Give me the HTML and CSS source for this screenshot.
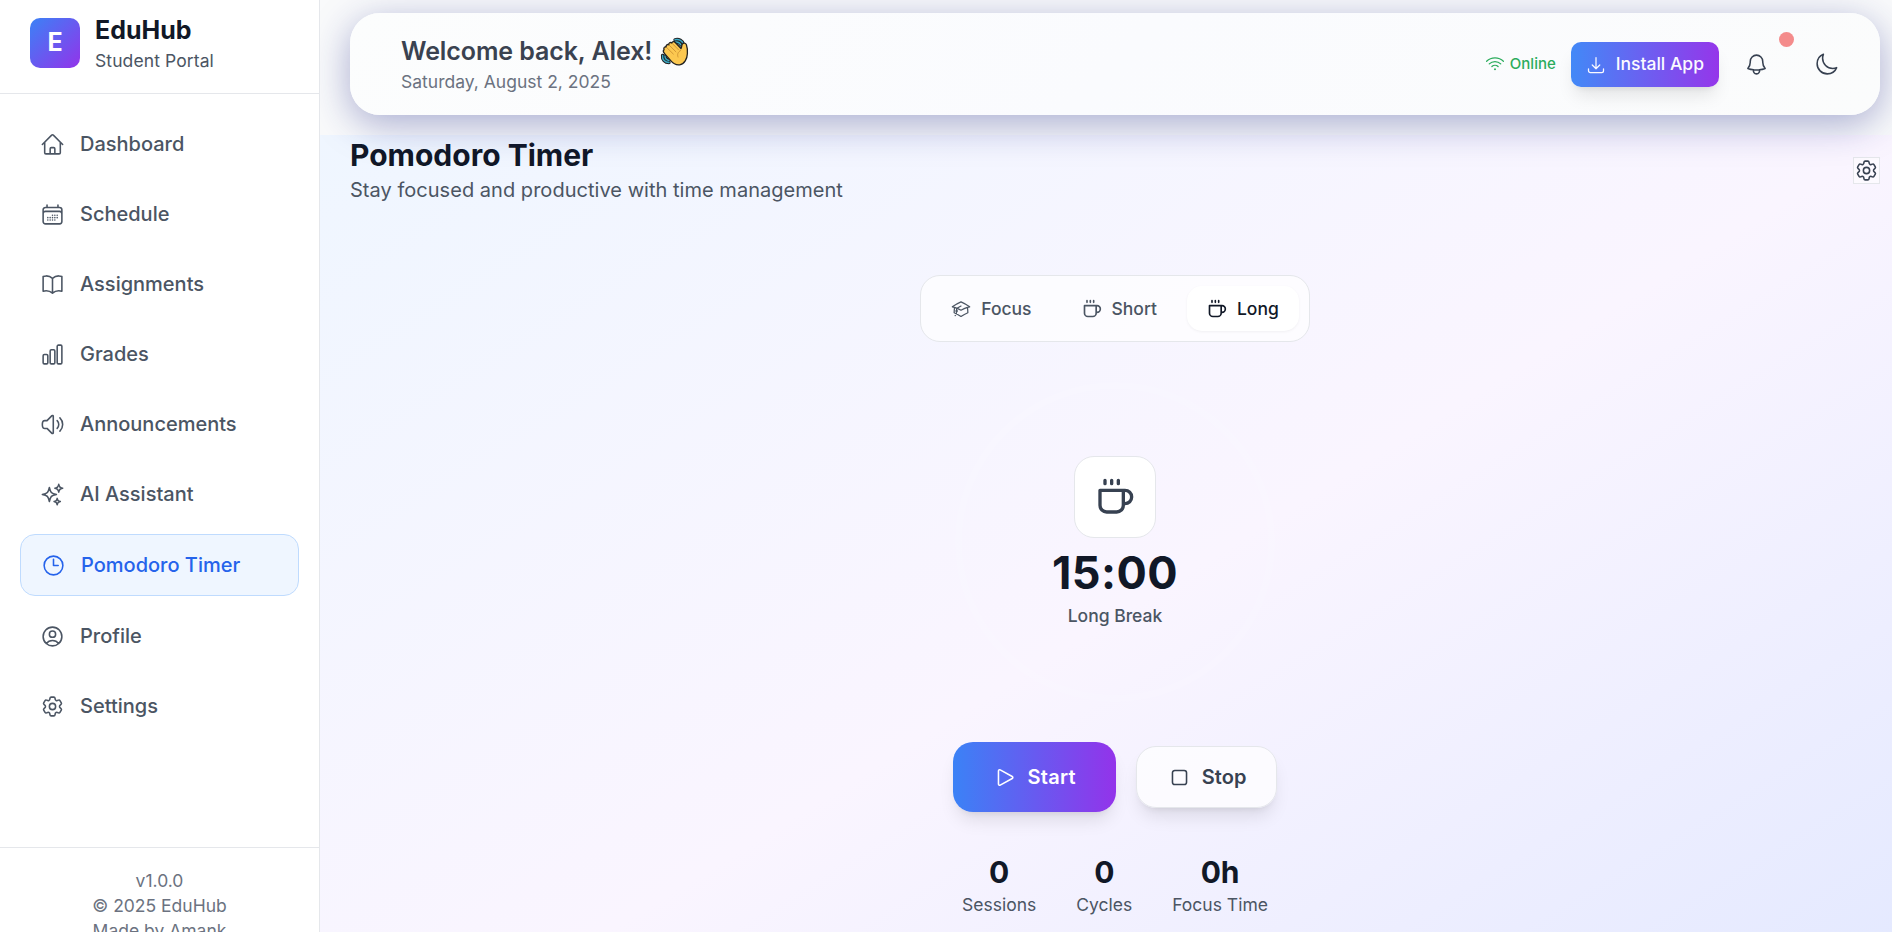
FILE: index.html
```html
<!DOCTYPE html>
<html lang="en">
<head>
<meta charset="utf-8">
<title>EduHub - Pomodoro Timer</title>
<link rel="stylesheet" href="styles.css">
</head>
<body>
<div class="app">
  <aside class="sidebar">
    <div class="brand">
      <div class="logo">E</div>
      <div>
        <div class="brand-name">EduHub</div>
        <div class="brand-sub">Student Portal</div>
      </div>
    </div>
    <nav class="nav">
      <a class="nav-item"><svg class="icon" viewBox="0 0 24 24"><path d="m2.25 12 8.954-8.955c.44-.439 1.152-.439 1.591 0L21.75 12M4.5 9.75v10.125c0 .621.504 1.125 1.125 1.125H9.75v-4.875c0-.621.504-1.125 1.125-1.125h2.25c.621 0 1.125.504 1.125 1.125V21h4.125c.621 0 1.125-.504 1.125-1.125V9.75M8.25 21h8.25"/></svg>Dashboard</a>
      <a class="nav-item"><svg class="icon" viewBox="0 0 24 24"><path d="M6.75 3v2.25M17.25 3v2.25M3 18.75V7.5a2.25 2.25 0 0 1 2.25-2.25h13.5A2.25 2.25 0 0 1 21 7.5v11.25m-18 0A2.25 2.25 0 0 0 5.25 21h13.5A2.25 2.25 0 0 0 21 18.75m-18 0v-7.5A2.25 2.25 0 0 1 5.25 9h13.5A2.25 2.25 0 0 1 21 11.25v7.5m-9-6h.008v.008H12v-.008ZM12 15h.008v.008H12V15Zm0 2.25h.008v.008H12v-.008ZM9.75 15h.008v.008H9.75V15Zm0 2.25h.008v.008H9.75v-.008ZM7.5 15h.008v.008H7.5V15Zm0 2.25h.008v.008H7.5v-.008Zm6.75-4.5h.008v.008h-.008v-.008Zm0 2.25h.008v.008h-.008V15Zm0 2.25h.008v.008h-.008v-.008Zm2.25-4.5h.008v.008H16.5v-.008Zm0 2.25h.008v.008H16.5V15Z"/></svg>Schedule</a>
      <a class="nav-item"><svg class="icon" viewBox="0 0 24 24"><path d="M12 6.042A8.967 8.967 0 0 0 6 3.75c-1.052 0-2.062.18-3 .512v14.25A8.987 8.987 0 0 1 6 18c2.305 0 4.408.867 6 2.292m0-14.25a8.966 8.966 0 0 1 6-2.292c1.052 0 2.062.18 3 .512v14.25A8.987 8.987 0 0 0 18 18a8.967 8.967 0 0 0-6 2.292m0-14.25v14.25"/></svg>Assignments</a>
      <a class="nav-item"><svg class="icon" viewBox="0 0 24 24"><path d="M3 13.125C3 12.504 3.504 12 4.125 12h2.25c.621 0 1.125.504 1.125 1.125v6.75C7.5 20.496 6.996 21 6.375 21h-2.25A1.125 1.125 0 0 1 3 19.875v-6.75ZM9.75 8.625c0-.621.504-1.125 1.125-1.125h2.25c.621 0 1.125.504 1.125 1.125v11.25c0 .621-.504 1.125-1.125 1.125h-2.25a1.125 1.125 0 0 1-1.125-1.125V8.625ZM16.5 4.125c0-.621.504-1.125 1.125-1.125h2.25C20.496 3 21 3.504 21 4.125v15.75c0 .621-.504 1.125-1.125 1.125h-2.25a1.125 1.125 0 0 1-1.125-1.125V4.125Z"/></svg>Grades</a>
      <a class="nav-item"><svg class="icon" viewBox="0 0 24 24"><path d="M19.114 5.636a9 9 0 0 1 0 12.728M16.463 8.288a5.25 5.25 0 0 1 0 7.424M6.75 8.25l4.72-4.72a.75.75 0 0 1 1.28.53v15.88a.75.75 0 0 1-1.28.53l-4.72-4.72H4.51c-.88 0-1.704-.507-1.938-1.354A9.009 9.009 0 0 1 2.25 12c0-.83.112-1.633.322-2.396C2.806 8.756 3.63 8.25 4.51 8.25H6.75Z"/></svg>Announcements</a>
      <a class="nav-item"><svg class="icon" viewBox="0 0 24 24"><path d="M9.813 15.904 9 18.75l-.813-2.846a4.5 4.5 0 0 0-3.09-3.09L2.25 12l2.846-.813a4.5 4.5 0 0 0 3.09-3.09L9 5.25l.813 2.846a4.5 4.5 0 0 0 3.09 3.09L15.75 12l-2.846.813a4.5 4.5 0 0 0-3.09 3.09ZM18.259 8.715 18 9.75l-.259-1.035a3.375 3.375 0 0 0-2.455-2.456L14.25 6l1.036-.259a3.375 3.375 0 0 0 2.455-2.456L18 2.25l.259 1.035a3.375 3.375 0 0 0 2.456 2.456L21.75 6l-1.035.259a3.375 3.375 0 0 0-2.456 2.456ZM16.894 20.567 16.5 21.75l-.394-1.183a2.25 2.25 0 0 0-1.423-1.423L13.5 18.75l1.183-.394a2.25 2.25 0 0 0 1.423-1.423l.394-1.183.394 1.183a2.25 2.25 0 0 0 1.423 1.423l1.183.394-1.183.394a2.25 2.25 0 0 0-1.423 1.423Z"/></svg>AI Assistant</a>
      <a class="nav-item active"><svg class="icon" viewBox="0 0 24 24"><path d="M12 6v6h4.5m4.5 0a9 9 0 1 1-18 0 9 9 0 0 1 18 0Z"/></svg>Pomodoro Timer</a>
      <a class="nav-item"><svg class="icon" viewBox="0 0 24 24"><path d="M17.982 18.725A7.488 7.488 0 0 0 12 15.75a7.488 7.488 0 0 0-5.982 2.975m11.963 0a9 9 0 1 0-11.963 0m11.963 0A8.966 8.966 0 0 1 12 21a8.966 8.966 0 0 1-5.982-2.275M15 9.75a3 3 0 1 1-6 0 3 3 0 0 1 6 0Z"/></svg>Profile</a>
      <a class="nav-item"><svg class="icon" viewBox="0 0 24 24"><path id="cog" d="M9.594 3.94c.09-.542.56-.94 1.11-.94h2.593c.55 0 1.02.398 1.11.94l.213 1.281c.063.374.313.686.645.87.074.04.147.083.22.127.325.196.72.257 1.075.124l1.217-.456a1.125 1.125 0 0 1 1.37.49l1.296 2.247a1.125 1.125 0 0 1-.26 1.431l-1.003.827c-.293.241-.438.613-.43.992a7.723 7.723 0 0 1 0 .255c-.008.378.137.75.43.991l1.004.827c.424.35.534.955.26 1.43l-1.298 2.247a1.125 1.125 0 0 1-1.369.491l-1.217-.456c-.355-.133-.75-.072-1.076.124a6.47 6.47 0 0 1-.22.128c-.331.183-.581.495-.644.869l-.213 1.281c-.09.543-.56.94-1.11.94h-2.594c-.55 0-1.019-.398-1.11-.94l-.213-1.281c-.062-.374-.312-.686-.644-.87a6.52 6.52 0 0 1-.22-.127c-.325-.196-.72-.257-1.076-.124l-1.217.456a1.125 1.125 0 0 1-1.369-.49l-1.297-2.247a1.125 1.125 0 0 1 .26-1.431l1.004-.827c.292-.24.437-.613.43-.991a6.932 6.932 0 0 1 0-.255c.007-.38-.138-.751-.43-.992l-1.004-.827a1.125 1.125 0 0 1-.26-1.43l1.297-2.247a1.125 1.125 0 0 1 1.37-.491l1.216.456c.356.133.751.072 1.076-.124.072-.044.146-.086.22-.128.332-.183.582-.495.644-.869l.214-1.28ZM15 12a3 3 0 1 1-6 0 3 3 0 0 1 6 0Z"/></svg>Settings</a>
    </nav>
    <div class="side-foot">
      <div>v1.0.0</div>
      <div>© 2025 EduHub</div>
      <div>Made by Amank</div>
    </div>
  </aside>

  <div class="content">
    <header class="topbar">
      <div class="card">
        <div>
          <div class="welcome">Welcome back, Alex!
            <svg class="wave" viewBox="0 0 28 28">
              <path d="M14 1.800c4-1 7.500 1 8.300 4.500M14.500 4c2.500-.2 4.500 1 5.500 3M1.600 17.500c-.6 4 2.400 7 6.400 7M4 18c0 2.300 1.500 4 4 4.500" class="wave-line-back"/>
              <path d="M14 1.800c4-1 7.500 1 8.300 4.500M14.500 4c2.500-.2 4.500 1 5.500 3M1.600 17.500c-.6 4 2.400 7 6.400 7M4 18c0 2.300 1.500 4 4 4.500" class="wave-line"/>
              <path d="M3.100 11.400c-.9-1.500.6-3 2.100-2.300-.6-1.700 1.100-3.200 2.600-2.300-.4-1.900 1.600-3 3-1.800.6-1.600 2.400-1.700 3.500-.5l5.700 6c.8-1.400.5-3 1.300-4.400 1-1.600 3.400-1.200 4.100.6.900 2.600 1.200 5.400 1 8.800-.2 5.300-3 10.700-7.800 11.300-3.900.5-6.500-1.300-8.900-4.100l-6.300-7.300c-1.200-1.400-1.400-2.900-.3-4Z" class="palm"/>
              <path d="m5.500 9.400 6.800 6.600M8.100 7.100l6.800 6.700M11.100 5.300l6.400 6.500M19.600 12.500c-2.900 1.500-3.500 4-2.600 6.500" class="crease"/>
            </svg>
          </div>
          <div class="date">Saturday, August 2, 2025</div>
        </div>
        <div class="tools">
          <div class="online"><svg class="icon sm" viewBox="0 0 24 24"><path d="M8.288 15.038a5.250 5.250 0 0 1 7.424 0M5.106 11.856c3.807-3.808 9.980-3.808 13.788 0M1.924 8.674c5.565-5.565 14.587-5.565 20.152 0M12.530 18.220l-.53.530-.53-.53a.75.75 0 0 1 1.060 0Z"/></svg>Online</div>
          <button class="install"><svg class="icon sm" viewBox="0 0 24 24"><path d="M3 16.500v2.250A2.250 2.250 0 0 0 5.250 21h13.500A2.250 2.250 0 0 0 21 18.750V16.500M16.500 12 12 16.500m0 0L7.500 12m4.500 4.500V3"/></svg>Install App</button>
          <button class="tool"><svg class="icon" viewBox="0 0 24 24"><path d="M14.857 17.082a23.848 23.848 0 0 0 5.454-1.310A8.967 8.967 0 0 1 18 9.750V9A6 6 0 0 0 6 9v.75a8.967 8.967 0 0 1-2.312 6.022c1.733.64 3.560 1.085 5.455 1.310m5.714 0a24.255 24.255 0 0 1-5.714 0m5.714 0a3 3 0 1 1-5.714 0"/></svg><span class="dot"></span></button>
          <button class="tool moon"><svg class="icon" viewBox="0 0 24 24"><path d="M21.752 15.002A9.720 9.720 0 0 1 18 15.750c-5.385 0-9.750-4.365-9.750-9.750 0-1.330.266-2.597.748-3.752A9.753 9.753 0 0 0 3 11.250C3 16.635 7.365 21 12.750 21a9.753 9.753 0 0 0 9.002-5.998Z"/></svg></button>
        </div>
      </div>
    </header>

    <main class="page">
      <div class="page-head">
        <div>
          <h1>Pomodoro Timer</h1>
          <p>Stay focused and productive with time management</p>
        </div>
        <button class="gear"><svg class="icon" viewBox="0 0 24 24"><use href="#cog"/></svg></button>
      </div>

      <div class="modes">
        <button class="mode"><svg class="icon sm" viewBox="0 0 24 24"><path d="M4.260 10.147a60.438 60.438 0 0 0-.491 6.347A48.620 48.620 0 0 1 12 20.904a48.620 48.620 0 0 1 8.232-4.410 60.460 60.460 0 0 0-.491-6.347m-15.482 0a50.636 50.636 0 0 0-2.658-.813A59.906 59.906 0 0 1 12 3.493a59.903 59.903 0 0 1 10.399 5.840c-.896.248-1.783.520-2.658.814m-15.482 0A50.717 50.717 0 0 1 12 13.489a50.702 50.702 0 0 1 7.740-3.342M6.750 15a.75.75 0 1 0 0-1.500.75.75 0 0 0 0 1.500Zm0 0v-3.675A55.378 55.378 0 0 1 12 8.443m-7.007 11.550A5.981 5.981 0 0 0 6.750 15.750v-1.500"/></svg><span>Focus</span></button>
        <button class="mode"><svg class="icon sm cup" viewBox="0 0 24 24"><path d="M17 8h1a4 4 0 1 1 0 8h-1M3 8h14v9a4 4 0 0 1-4 4H7a4 4 0 0 1-4-4ZM6 2v2M10 2v2M14 2v2"/></svg><span>Short</span></button>
        <button class="mode selected"><svg class="icon sm cup" viewBox="0 0 24 24"><path d="M17 8h1a4 4 0 1 1 0 8h-1M3 8h14v9a4 4 0 0 1-4 4H7a4 4 0 0 1-4-4ZM6 2v2M10 2v2M14 2v2"/></svg><span>Long</span></button>
      </div>

      <div class="ring">
        <div class="ring-icon"><svg class="icon lg cup" viewBox="0 0 24 24"><path d="M17 8h1a4 4 0 1 1 0 8h-1M3 8h14v9a4 4 0 0 1-4 4H7a4 4 0 0 1-4-4ZM6 2v2M10 2v2M14 2v2"/></svg></div>
        <div class="time">15:00</div>
        <div class="phase">Long Break</div>
      </div>

      <div class="controls">
        <button class="start"><svg class="icon" viewBox="0 0 24 24"><path d="M5.250 5.653c0-.856.917-1.398 1.667-.986l11.540 6.347a1.125 1.125 0 0 1 0 1.972l-11.540 6.347a1.125 1.125 0 0 1-1.667-.986V5.653Z"/></svg>Start</button>
        <button class="stop"><svg class="icon" viewBox="0 0 24 24"><path d="M5.250 7.500A2.250 2.250 0 0 1 7.500 5.250h9a2.250 2.250 0 0 1 2.250 2.250v9a2.250 2.250 0 0 1-2.250 2.250h-9a2.250 2.250 0 0 1-2.250-2.250v-9Z"/></svg>Stop</button>
      </div>

      <div class="stats">
        <div><div class="num">0</div><div class="lbl">Sessions</div></div>
        <div><div class="num">0</div><div class="lbl">Cycles</div></div>
        <div><div class="num">0h</div><div class="lbl">Focus Time</div></div>
      </div>
    </main>
  </div>
</div>
</body>
</html>
```
FILE: styles.css
```css
* { box-sizing: border-box; margin: 0; padding: 0; }
html { font-size: 20px; height: 100%; overflow: hidden; }
body { height: 100%; overflow: hidden; background: #f9fafb; font-family: Inter, "Liberation Sans", sans-serif; color: #111827; line-height: 1.5; }
button { font: inherit; border: 0; background: none; color: inherit; display: flex; align-items: center; }

.app { display: flex; height: 100vh; }

.icon { width: 25px; height: 25px; flex: none; fill: none; stroke: currentColor; stroke-width: 1.5; stroke-linecap: round; stroke-linejoin: round; }
.icon.sm { width: 20px; height: 20px; }
.icon.lg { width: 40px; height: 40px; }
.icon.cup { stroke-width: 2; }

/* Sidebar */
.sidebar { width: 320px; flex: none; display: flex; flex-direction: column; background: #fff; border-right: 1px solid #e5e7eb; position: relative; z-index: 2; }
.brand { display: flex; align-items: center; gap: 15px; height: 94px; padding: 13px 30px 20px; border-bottom: 1px solid #e5e7eb; flex: none; }
.logo { width: 50px; height: 50px; border-radius: 10px; display: grid; place-items: center; background: linear-gradient(to bottom right, #3b82f6, #9333ea); color: #fff; font-weight: 700; font-size: 25px; }
.brand-name { font-size: 25px; line-height: 35px; font-weight: 700; }
.brand-sub { font-size: 17.5px; line-height: 25px; letter-spacing: 0.1px; color: #4b5563; }
.nav { display: flex; flex-direction: column; gap: 10px; padding: 20px; }
.nav-item { display: flex; align-items: center; gap: 15px; padding: 15px 20px; border-radius: 15px; line-height: 30px; font-weight: 500; color: #4b5563; }
.nav-item.active { background: #eff6ff; border: 1px solid #bfdbfe; color: #2563eb; }
.side-foot { margin-top: auto; height: 85px; flex: none; padding: 20px; border-top: 1px solid #e5e7eb; text-align: center; font-size: 17.5px; line-height: 25px; color: #6b7280; overflow: hidden; }

/* Top bar */
.content { flex: 1; min-width: 0; display: flex; flex-direction: column; }
.topbar { height: 135px; flex: none; padding: 13px 12px 20px 30px; position: relative; z-index: 1; }
.card { height: 102px; padding: 0 26px 0 51px; border-radius: 30px; display: flex; align-items: center; justify-content: space-between; background: linear-gradient(135deg, #fcfdfd, #fafbfe 50%, #fbfcfc); box-shadow: 0 9px 38px rgba(31, 38, 135, 0.37); }
.welcome { display: flex; align-items: center; gap: 9px; font-size: 25px; line-height: 35px; font-weight: 600; letter-spacing: -0.09px; color: #3a4250; }
.wave { width: 28px; height: 28px; overflow: visible; }
.wave-line-back { fill: none; stroke: #222; stroke-width: 3.4; stroke-linecap: round; }
.wave-line { fill: none; stroke: #3aa9c4; stroke-width: 1.4; stroke-linecap: round; }
.palm { fill: #fcc850; stroke: #222; stroke-width: 1.3; stroke-linejoin: round; }
.crease { fill: none; stroke: #c78a2e; stroke-width: .8; stroke-linecap: round; }
.date { font-size: 17.5px; line-height: 25px; color: #6b7280; }
.tools { display: flex; align-items: center; gap: 15px; color: #374151; }
.online { display: flex; align-items: center; gap: 5px; font-size: 15px; line-height: 20px; font-weight: 500; color: #2bac5c; }
.install { gap: 10px; height: 45px; padding: 1px 15px 0; border-radius: 10px; font-size: 17.5px; font-weight: 500; color: #fafaff; background: linear-gradient(to right, #4289f7, #9536ea); box-shadow: 0 12px 18px -4px rgba(0, 0, 0, 0.1), 0 5px 7px -5px rgba(0, 0, 0, 0.1); }
.tool { position: relative; padding: 15px; margin-left: -5px; }
.tool.moon { margin-left: 0; }
.dot { position: absolute; top: -5px; right: -10px; width: 15px; height: 15px; border-radius: 50%; background: #f48b8b; }

/* Timer page */
.page { height: 975px; flex: none; padding: 0 12px 0 30px; display: flex; flex-direction: column; align-items: center; background: linear-gradient(to bottom right, #eff6ff, #faf5ff, #e0e7ff); }
.page-head { width: 100%; height: 70px; display: flex; align-items: center; justify-content: space-between; }
h1 { font-size: 30px; line-height: 40px; font-weight: 700; }
.page-head p { line-height: 30px; letter-spacing: 0.03px; color: #4b5563; }
.gear { border: 1px solid #e5e7eb; background: rgba(255, 255, 255, 0.5); color: #374151; }
.modes { display: flex; gap: 10px; margin-top: 70px; padding: 10px; border: 1px solid #e5e7eb; border-radius: 20px; background: rgba(255, 255, 255, 0.7); }
.mode { gap: 10px; height: 45px; padding: 0 20px; border-radius: 15px; font-size: 17.5px; font-weight: 500; color: #4b5563; }
.mode span { padding-top: 1px; }
.mode.selected { background: #fff; color: #111827; box-shadow: 0 1px 3px rgba(0, 0, 0, 0.05); }
.ring { width: 320px; height: 320px; margin-top: 40px; flex: none; border: 7px solid rgba(255, 255, 255, 0.12); border-radius: 50%; display: flex; flex-direction: column; align-items: center; justify-content: center; }
.ring-icon { width: 82px; height: 82px; display: grid; place-items: center; background: #fff; border: 1px solid #e5e7eb; border-radius: 20px; color: #374151; }
.time { margin-top: 10px; font-size: 45px; line-height: 50px; font-weight: 700; letter-spacing: 0.4px; }
.phase { margin-top: 5px; font-size: 17.5px; line-height: 25px; font-weight: 500; color: #4b5563; }
.controls { display: flex; align-items: center; gap: 20px; margin-top: 40px; font-weight: 600; }
.controls button { gap: 10px; border-radius: 20px; line-height: 30px; box-shadow: 0 12px 18px -4px rgba(0, 0, 0, 0.1), 0 5px 7px -5px rgba(0, 0, 0, 0.1); }
.controls .start { padding: 20px 40px; letter-spacing: 0.25px; color: #fff; background: linear-gradient(to right, #3b82f6, #9333ea); }
.controls .stop { padding: 15px 30px; border: 1px solid #e5e7eb; color: #374151; background: rgba(255, 255, 255, 0.7); }
.stats { display: flex; gap: 40px; margin-top: 40px; text-align: center; }
.num { font-size: 30px; line-height: 40px; font-weight: 700; }
.lbl { font-size: 17.5px; line-height: 25px; color: #4b5563; }
```
